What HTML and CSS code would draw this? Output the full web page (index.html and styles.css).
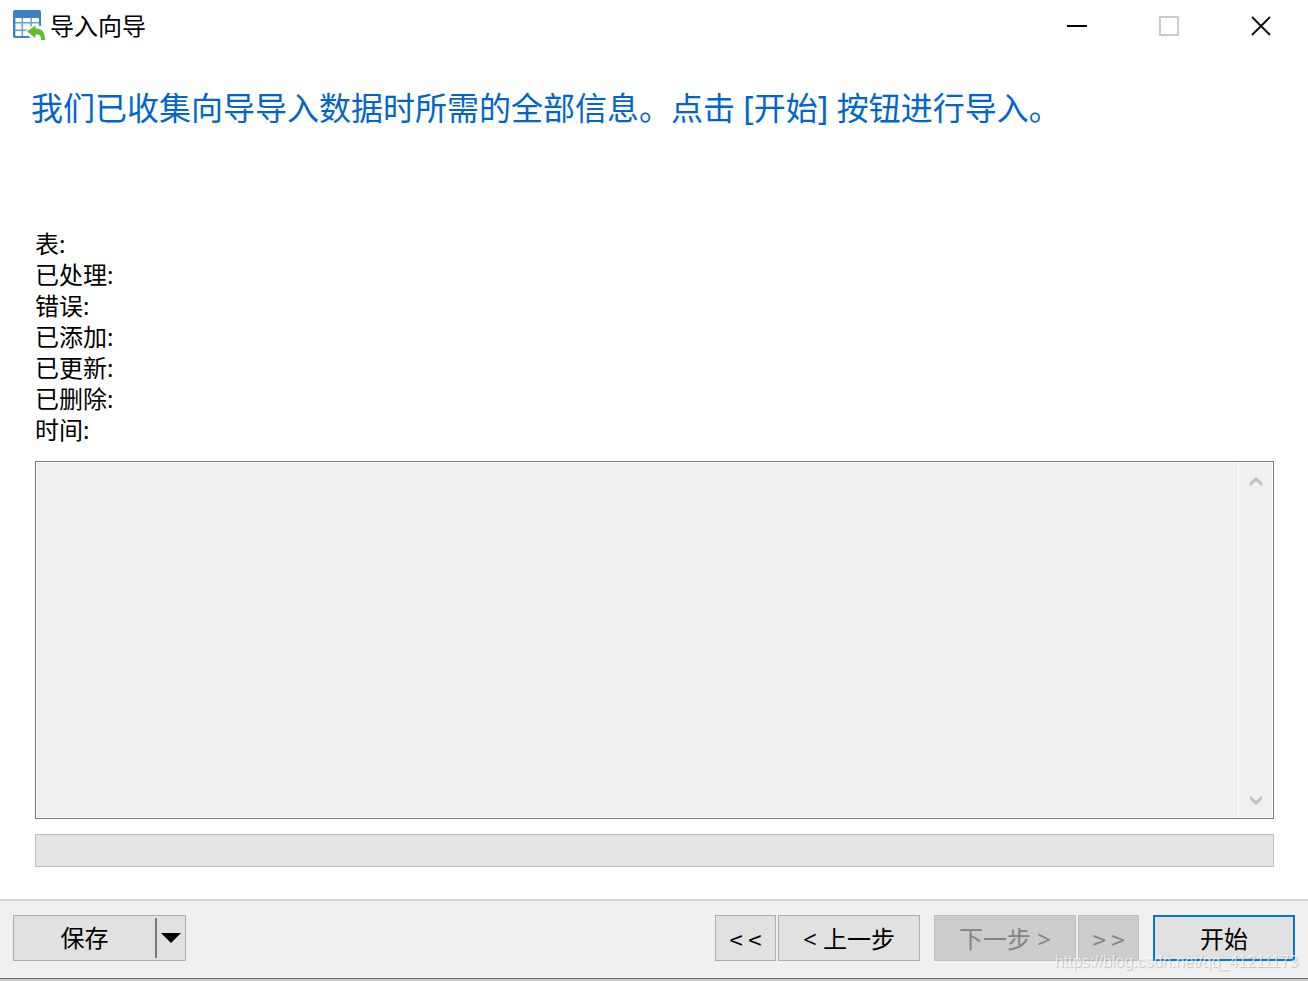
FILE: index.html
```
<!DOCTYPE html>
<html lang="zh-CN">
<head>
  <meta charset="UTF-8">
  <meta name="viewport" content="width=device-width, initial-scale=1.0">
  <title>导入向导</title>
  <link rel="stylesheet" href="styles.css">
</head>
<body>
  <header class="titlebar">
    <svg class="app-icon" width="32" height="32" viewBox="0 0 32 32" aria-hidden="true">
      <path d="M2 0H26Q28 0 28 2V16H18V28H2Q0 28 0 26V2Q0 0 2 0Z" fill="#3c82c0"/>
      <path d="M2 8H26V16H18V26H2Z" fill="#5fa3dc"/>
      <path d="M2.500 8H8.500V12H2.500ZM10 8H17.500V12H10ZM19 8H26V12H19ZM2.500 13.500H8.500V19.500H2.500ZM10 13.500H17.500V19.500H10ZM19 13.500H26V19H19ZM2.500 21H8.500V26H2.500ZM10 21H18V26H10Z" fill="#fff"/>
      <path d="M12 21.500L22 13.500V17H29V30H19Z" fill="#fff"/>
      <path d="M14 21.500L22.500 15.500V18.500C29 18.500 32 22 32 30H28C28 25.500 26.500 24 22.500 24.500V28Z" fill="#5cc02c"/>
    </svg>
    <h1>导入向导</h1>
    <div class="window-buttons">
      <button type="button" aria-label="最小化">
        <svg width="20" height="20"><path d="M0 10H20" stroke="#000" stroke-width="2"/></svg>
      </button>
      <button type="button" aria-label="最大化" disabled>
        <svg width="20" height="20"><path d="M1 1H19V19H1Z" fill="none" stroke="#ccc" stroke-width="2"/></svg>
      </button>
      <button type="button" aria-label="关闭">
        <svg width="20" height="20"><path d="M1 1L19 19M19 1L1 19" stroke="#111" stroke-width="2"/></svg>
      </button>
    </div>
  </header>

  <main>
    <h2>我们已收集向导导入数据时所需的全部信息。点击 [开始] 按钮进行导入。</h2>

    <ul class="status">
      <li>表:</li>
      <li>已处理:</li>
      <li>错误:</li>
      <li>已添加:</li>
      <li>已更新:</li>
      <li>已删除:</li>
      <li>时间:</li>
    </ul>

    <div class="log">
      <textarea aria-label="日志" readonly></textarea>
      <div class="scrollbar">
        <svg width="12" height="10"><path d="M0 5.500L6 0L12 5.500V9.500L6 4L0 9.500Z" fill="#bfbfbf"/></svg>
        <svg width="12" height="10"><path d="M0 0.500L6 6L12 0.500V4.500L6 10L0 4.500Z" fill="#bfbfbf"/></svg>
      </div>
    </div>

    <progress value="0" max="100" aria-label="进度"></progress>
  </main>

  <footer>
    <div class="split">
      <button type="button" class="save">保存</button>
      <button type="button" class="more" aria-label="更多保存选项">
        <svg width="20" height="10"><path d="M0 0H20L10 10Z"/></svg>
      </button>
    </div>
    <div class="steps">
      <div class="pair">
        <button type="button" class="btn small">&lt; &lt;</button>
        <button type="button" class="btn">&lt; 上一步</button>
      </div>
      <div class="pair">
        <button type="button" class="btn" disabled>下一步 &gt;</button>
        <button type="button" class="btn small" disabled>&gt; &gt;</button>
      </div>
      <button type="button" class="btn primary">开始</button>
    </div>
    <span class="watermark">https://blog.csdn.net/qq_41211173</span>
  </footer>
</body>
</html>
```

FILE: styles.css
```
* {
  box-sizing: border-box;
}
body {
  margin: 0;
  min-height: 100vh;
  display: flex;
  flex-direction: column;
  background: #fff;
  color: #000;
  font-family: "Noto Sans", "Noto Sans CJK SC", sans-serif;
  font-size: 24px;
}
button {
  font-family: "Noto Sans", "Noto Sans CJK SC", sans-serif;
  font-size: 24px;
  line-height: 32px;
  color: #000;
  padding: 0;
}
svg {
  display: block;
}

/* title bar */
.titlebar {
  display: flex;
  align-items: center;
  height: 52px;
  padding: 0 1px 0 13px;
}
h1 {
  margin: 0 auto 0 5px;
  font-size: 24px;
  font-weight: 400;
  line-height: 32px;
}
.window-buttons {
  display: flex;
}
.window-buttons button {
  display: flex;
  align-items: center;
  justify-content: center;
  width: 92px;
  height: 52px;
  border: 0;
  background: none;
}

/* content */
main {
  flex: 1;
  display: flex;
  flex-direction: column;
  padding: 32px 34px 32px 35px;
}
h2 {
  margin: 0 0 96px -4px;
  font-size: 32px;
  font-weight: 400;
  line-height: 48px;
  color: #0066cc;
}
.status {
  list-style: none;
  margin: 0 0 16px;
  padding: 0;
  line-height: 31px;
}
.log {
  flex: 1;
  display: flex;
  min-height: 120px;
  margin-bottom: 15px;
  padding: 1px;
  border: 1px solid #7a7a7a;
  background: #fff;
}
.log textarea {
  flex: 1;
  border: 0;
  padding: 4px;
  resize: none;
  outline: none;
  background: #f0f0f0;
  font: inherit;
}
.scrollbar {
  display: flex;
  flex-direction: column;
  justify-content: space-between;
  align-items: center;
  width: 33px;
  margin-left: 1px;
  padding: 14px 0 12px;
  background: #f0f0f0;
}
progress {
  appearance: none;
  display: block;
  width: 100%;
  height: 33px;
  border: 1px solid #bcbcbc;
  background: #e6e6e6;
}
progress::-webkit-progress-bar {
  background: #e6e6e6;
}
progress::-webkit-progress-value {
  background: #06b025;
}

/* button row */
footer {
  position: relative;
  display: flex;
  justify-content: space-between;
  padding: 14px 13px 17px;
  border-top: 2px solid #d6d6d6;
  border-bottom: 1px solid #707070;
  margin-bottom: 2px;
  background: #f0f0f0;
  box-shadow: 0 2px 0 #c8c8c8;
}
.split {
  display: flex;
  align-items: center;
  width: 173px;
  height: 46px;
  border: 1px solid #adadad;
  background: #e1e1e1;
}
.split button {
  height: 40px;
  border: 0;
  background: none;
}
.split .save {
  flex: 1;
}
.split .more {
  display: flex;
  align-items: center;
  justify-content: center;
  width: 30px;
  border-left: 2px solid #777;
}
.steps {
  display: flex;
  gap: 14px;
}
.pair {
  display: flex;
  gap: 2px;
}
.btn {
  width: 142px;
  height: 46px;
  padding-top: 2px;
  border: 1px solid #adadad;
  background: #e1e1e1;
}
.btn.small {
  width: 61px;
  font-family: "Noto Sans CJK SC", sans-serif;
}
.btn:disabled {
  border-color: #bfbfbf;
  background: #ccc;
  color: #838383;
}
.btn.primary {
  border: 2px solid #0078d7;
}
.watermark {
  position: absolute;
  right: 10px;
  bottom: 6px;
  font-family: "Liberation Sans", sans-serif;
  font-size: 16px;
  line-height: 20px;
  color: rgba(255, 255, 255, 0.7);
  text-shadow: 1px 1px 1px rgba(0, 0, 0, 0.2);
  pointer-events: none;
}
```
